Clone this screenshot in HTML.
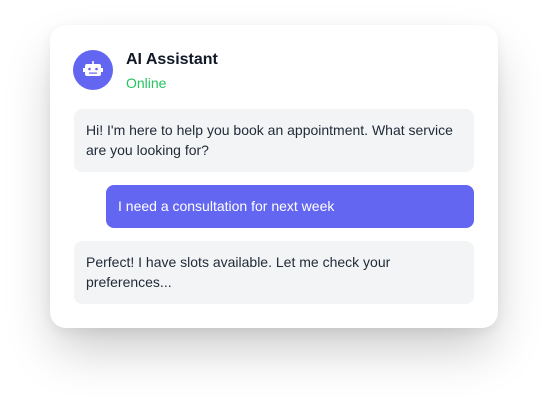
<!DOCTYPE html><html><head><style>
body{margin:0;width:548px;height:404px;background:#fff;font-family:"Liberation Sans",sans-serif;position:relative;overflow:hidden}
.card{position:absolute;left:50px;top:25px;width:448px;height:303px;background:#fff;border-radius:16px;box-shadow:0 25px 50px -6px rgba(0,0,0,0.22),0 4px 12px rgba(0,0,0,0.06)}
.av{position:absolute;left:73px;top:50px;width:40px;height:40px;border-radius:50%;background:#6366f1}
.t{position:absolute;left:126px;top:51px;font-size:16px;font-weight:bold;color:#111827}
.o{position:absolute;left:126px;top:75px;font-size:14px;color:#22c55e}
.b{position:absolute;box-sizing:border-box;border-radius:8px;font-size:14px;line-height:20px;padding:11px 12px}
.g{background:#f3f4f6;color:#1f2937;left:74px;width:400px}
</style></head><body>
<div class="card"></div>
<div class="av"><svg width="40" height="40" viewBox="0 0 40 40"><rect x="19.2" y="11" width="1.6" height="4" fill="#fff"/><rect x="12" y="14" width="16" height="12" rx="2" fill="#fff"/><rect x="10" y="18" width="2" height="4" fill="#fff"/><rect x="28" y="18" width="2" height="4" fill="#fff"/><circle cx="16.5" cy="19" r="1.3" fill="#6366f1"/><circle cx="23.5" cy="19" r="1.3" fill="#6366f1"/><rect x="16" y="22.5" width="8" height="1.2" fill="#6366f1"/></svg></div>
<div class="t">AI Assistant</div>
<div class="o">Online</div>
<div class="b g" style="top:109px;height:63px">Hi! I'm here to help you book an appointment. What service are you looking for?</div>
<div class="b" style="top:185px;left:106px;width:368px;height:43px;background:#6366f1;color:#fff">I need a consultation for next week</div>
<div class="b g" style="top:241px;height:63px">Perfect! I have slots available. Let me check your preferences...</div>
</body></html>
